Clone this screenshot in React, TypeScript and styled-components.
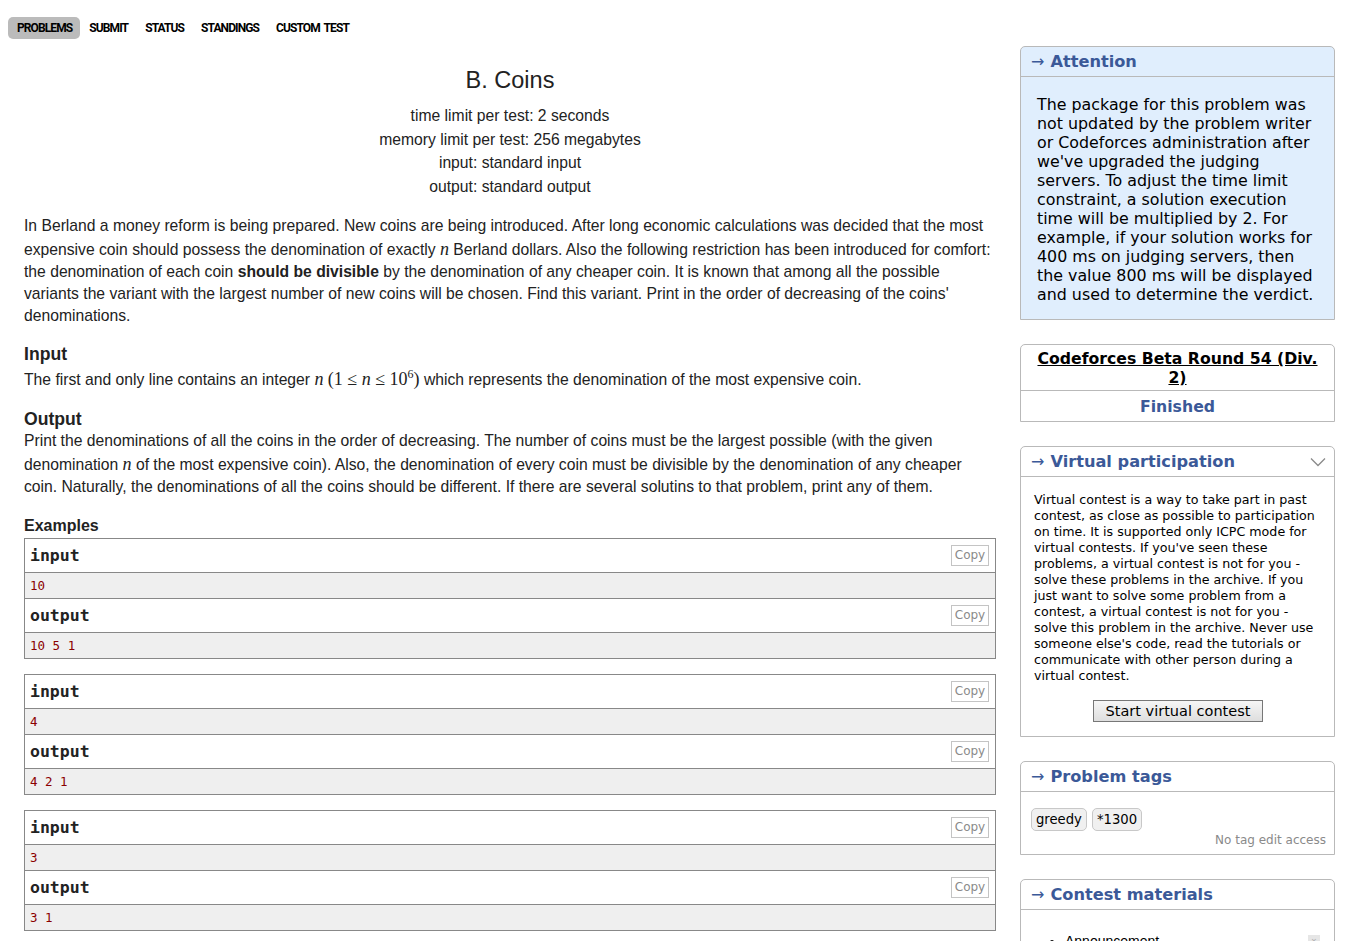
import React from "react";
import styled, { createGlobalStyle } from "styled-components";

const Global = createGlobalStyle`
  html, body { margin: 0; padding: 0; background: #fff; }
  body { font-family: "Liberation Sans", Arial, sans-serif; color: #222; }
`;

const Page = styled.div`
  width: 1356px;
`;

const Nav = styled.nav`
  display: flex;
  padding: 17px 0 0 8px;
  height: 22px;
`;

const NavItem = styled.a<{ $active?: boolean }>`
  display: flex;
  align-items: center;
  padding: 0 8px 0 9px;
  height: 22px;
  border-radius: 5px;
  background: ${(p) => (p.$active ? "#bbbbbb" : "transparent")};
  font-family: Roboto, "Liberation Sans", sans-serif;
  font-weight: bold;
  font-size: 12px;
  letter-spacing: -0.9px;
  word-spacing: 2px;
  color: #000;
  text-decoration: none;
`;

const Layout = styled.div`
  display: grid;
  grid-template-columns: 972px 315px;
  column-gap: 24px;
  padding: 7px 21px 0 24px;
  align-items: start;
`;

const Main = styled.main`
  padding-top: 19px;
`;

const Header = styled.div`
  text-align: center;
  font-size: 15.7px;
  line-height: 23.7px;
  color: #222;
`;

const Title = styled.div`
  font-size: 23.5px;
  line-height: 30px;
  margin-bottom: 9px;
`;

const Para = styled.p`
  margin: 16px 0 0;
  font-size: 15.7px;
  line-height: 22px;
  color: #222;
`;

const Var = styled.span`
  font-family: "Liberation Serif", "Times New Roman", serif;
  font-style: italic;
  font-size: 18px;
  line-height: 24px;
`;

const MathText = styled.span`
  font-family: "Liberation Serif", "Times New Roman", serif;
  font-size: 18px;
  line-height: 28px;
  sup { font-size: 12px; vertical-align: 7px; line-height: 0; }
`;

const SectionTitle = styled.div<{ $size?: number; $gap?: number }>`
  margin-top: ${(p) => p.$gap ?? 17}px;
  font-weight: bold;
  font-size: ${(p) => p.$size ?? 17.6}px;
  line-height: 21px;
  color: #222;
`;

const SectionText = styled.div`
  font-size: 15.7px;
  line-height: 22px;
  color: #222;
`;

const Samples = styled.div`
  margin-top: 2px;
  display: flex;
  flex-direction: column;
  gap: 15px;
`;

const SampleBox = styled.div`
  border: 1px solid #888;
`;

const SampleHead = styled.div<{ $first?: boolean }>`
  display: flex;
  justify-content: space-between;
  align-items: center;
  height: 33px;
  padding: 0 6px 0 5px;
  border-top: ${(p) => (p.$first ? "none" : "1px solid #888")};
  border-bottom: 1px solid #888;
  font-family: "DejaVu Sans Mono", "Liberation Mono", monospace;
  font-weight: bold;
  font-size: 16.5px;
  color: #222;
  background: #fff;
`;

const CopyBtn = styled.span`
  display: inline-flex;
  align-items: center;
  justify-content: center;
  width: 36px;
  height: 19px;
  border: 1px solid #c4c4c4;
  font-family: "DejaVu Sans", Verdana, sans-serif;
  font-weight: normal;
  font-size: 12px;
  color: #8a8a8a;
`;

const SampleData = styled.pre`
  margin: 0;
  height: 25px;
  line-height: 25px;
  padding: 0 5px;
  background: #efefef;
  font-family: "DejaVu Sans Mono", "Liberation Mono", monospace;
  font-size: 12.5px;
  color: #8b0000;
`;

const Side = styled.aside`
  display: flex;
  flex-direction: column;
  gap: 24px;
`;

const Box = styled.div<{ $bg?: string }>`
  border: 1px solid #b9b9b9;
  border-radius: 5px 5px 0 0;
  background: ${(p) => p.$bg ?? "#fff"};
  overflow: hidden;
`;

const BoxCaption = styled.div`
  display: flex;
  align-items: center;
  justify-content: space-between;
  height: 29px;
  padding: 0 8px 0 10px;
  border-bottom: 1px solid #b9b9b9;
  font-family: "DejaVu Sans", Verdana, sans-serif;
  font-weight: bold;
  font-size: 16.2px;
  color: #3b5998;
`;

const Arrow = styled.span`
  font-family: "DejaVu Sans", Verdana, sans-serif;
  font-weight: normal;
  font-size: 16px;
  margin-right: 6px;
`;

const AttentionText = styled.div`
  padding: 18px 16px 15px;
  font-family: "DejaVu Sans", Verdana, sans-serif;
  font-size: 15.85px;
  line-height: 19px;
  color: #000;
`;

const RoundTitle = styled.div`
  padding: 4px 10px 3px;
  text-align: center;
  border-bottom: 1px solid #b9b9b9;
  font-family: "DejaVu Sans", Verdana, sans-serif;
  font-weight: bold;
  font-size: 15.7px;
  line-height: 19px;
  a { color: #000; text-decoration: underline; }
`;

const RoundStatus = styled.div`
  height: 30px;
  padding-top: 1px;
  box-sizing: border-box;
  display: flex;
  align-items: center;
  justify-content: center;
  font-family: "DejaVu Sans", Verdana, sans-serif;
  font-weight: bold;
  font-size: 15.7px;
  color: #3b5998;
`;

const VirtualBody = styled.div`
  padding: 15px 12px 14px 13px;
  font-family: "DejaVu Sans", Verdana, sans-serif;
  font-size: 12.65px;
  line-height: 16px;
  color: #000;
`;

const ButtonRow = styled.div`
  display: flex;
  justify-content: center;
  margin-top: 16px;
`;

const StartButton = styled.button`
  height: 22px;
  width: 170px;
  padding: 0;
  border: 1px solid #777;
  background: linear-gradient(#f6f6f6, #dedede);
  font-family: "DejaVu Sans", Verdana, sans-serif;
  font-size: 14.5px;
  color: #000;
`;

const TagsBody = styled.div`
  padding: 16px 8px 6px 10px;
`;

const TagRow = styled.div`
  display: flex;
  gap: 5px;
`;

const Tag = styled.span`
  display: inline-flex;
  align-items: center;
  height: 21px;
  padding: 0 4px;
  border: 1px solid #c8c8c8;
  border-radius: 5px;
  background: #f0f0f0;
  font-family: "DejaVu Sans", Verdana, sans-serif;
  font-size: 13.2px;
  color: #000;
`;

const NoAccess = styled.div`
  margin-top: 1px;
  text-align: right;
  font-family: "DejaVu Sans", Verdana, sans-serif;
  font-size: 12px;
  line-height: 16px;
  color: #8a8a8a;
`;

const MaterialsList = styled.ul`
  margin: 0;
  padding: 22px 30px 10px 44px;
  font-family: "Liberation Sans", Arial, sans-serif;
  font-size: 14px;
  line-height: 18px;
`;

const MaterialItem = styled.li`
  position: relative;
  color: #000;
`;

const SmallIcon = styled.span`
  position: absolute;
  right: -16px;
  top: 3px;
  width: 12px;
  height: 12px;
  background: #e6e6e6;
  color: #aaa;
  font-size: 9px;
  line-height: 12px;
  text-align: center;
`;

const samples = [
  { input: "10", output: "10 5 1" },
  { input: "4", output: "4 2 1" },
  { input: "3", output: "3 1" },
];

const Caption: React.FC<{ title: string; chevron?: boolean }> = ({ title, chevron }) => (
  <BoxCaption>
    <span>
      <Arrow>→</Arrow>
      {title}
    </span>
    {chevron && (
      <svg width="16" height="10" viewBox="0 0 16 10">
        <polyline points="1,1.5 8,8.5 15,1.5" fill="none" stroke="#8a8a8a" strokeWidth="1.3" />
      </svg>
    )}
  </BoxCaption>
);

export default function App() {
  return (
    <Page>
      <Global />
      <Nav>
        <NavItem $active>PROBLEMS</NavItem>
        <NavItem>SUBMIT</NavItem>
        <NavItem>STATUS</NavItem>
        <NavItem>STANDINGS</NavItem>
        <NavItem>CUSTOM TEST</NavItem>
      </Nav>
      <Layout>
        <Main>
          <Header>
            <Title>B. Coins</Title>
            <div>time limit per test: 2 seconds</div>
            <div>memory limit per test: 256 megabytes</div>
            <div>input: standard input</div>
            <div>output: standard output</div>
          </Header>
          <Para>
            In Berland a money reform is being prepared. New coins are being introduced. After long economic
            calculations was decided that the most expensive coin should possess the denomination of exactly{" "}
            <Var>n</Var> Berland dollars. Also the following restriction has been introduced for comfort: the
            denomination of each coin <b>should be divisible</b> by the denomination of any cheaper coin. It is known
            that among all the possible variants the variant with the largest number of new coins will be chosen. Find
            this variant. Print in the order of decreasing of the coins' denominations.
          </Para>
          <SectionTitle>Input</SectionTitle>
          <SectionText>
            The first and only line contains an integer <Var>n</Var>{" "}
            <MathText>
              (1 ≤ <i>n</i> ≤ 10<sup>6</sup>)
            </MathText>{" "}
            which represents the denomination of the most expensive coin.
          </SectionText>
          <SectionTitle $gap={16}>Output</SectionTitle>
          <SectionText>
            Print the denominations of all the coins in the order of decreasing. The number of coins must be the
            largest possible (with the given denomination <Var>n</Var> of the most expensive coin). Also, the
            denomination of every coin must be divisible by the denomination of any cheaper coin. Naturally, the
            denominations of all the coins should be different. If there are several solutins to that problem, print
            any of them.
          </SectionText>
          <SectionTitle $size={16} $gap={17}>
            Examples
          </SectionTitle>
          <Samples>
            {samples.map((s, i) => (
              <SampleBox key={i}>
                <SampleHead $first>
                  input
                  <CopyBtn>Copy</CopyBtn>
                </SampleHead>
                <SampleData>{s.input}</SampleData>
                <SampleHead>
                  output
                  <CopyBtn>Copy</CopyBtn>
                </SampleHead>
                <SampleData>{s.output}</SampleData>
              </SampleBox>
            ))}
          </Samples>
        </Main>
        <Side>
          <Box $bg="#e0eefd">
            <Caption title="Attention" />
            <AttentionText>
              The package for this problem was not updated by the problem writer or Codeforces administration after
              we've upgraded the judging servers. To adjust the time limit constraint, a solution execution time will
              be multiplied by 2. For example, if your solution works for 400 ms on judging servers, then the value 800
              ms will be displayed and used to determine the verdict.
            </AttentionText>
          </Box>
          <Box>
            <RoundTitle>
              <a>Codeforces Beta Round 54 (Div. 2)</a>
            </RoundTitle>
            <RoundStatus>Finished</RoundStatus>
          </Box>
          <Box>
            <Caption title="Virtual participation" chevron />
            <VirtualBody>
              Virtual contest is a way to take part in past contest, as close as possible to participation on time.
              It is supported only ICPC mode for virtual contests. If you've seen these problems, a virtual contest is
              not for you - solve these problems in the archive. If you just want to solve some problem from a
              contest, a virtual contest is not for you - solve this problem in the archive. Never use someone else's
              code, read the tutorials or communicate with other person during a virtual contest.
              <ButtonRow>
                <StartButton>Start virtual contest</StartButton>
              </ButtonRow>
            </VirtualBody>
          </Box>
          <Box>
            <Caption title="Problem tags" />
            <TagsBody>
              <TagRow>
                <Tag>greedy</Tag>
                <Tag>*1300</Tag>
              </TagRow>
              <NoAccess>No tag edit access</NoAccess>
            </TagsBody>
          </Box>
          <Box>
            <Caption title="Contest materials" />
            <MaterialsList>
              <MaterialItem>
                Announcement
                <SmallIcon>×</SmallIcon>
              </MaterialItem>
              <MaterialItem>Tutorial</MaterialItem>
            </MaterialsList>
          </Box>
        </Side>
      </Layout>
    </Page>
  );
}
